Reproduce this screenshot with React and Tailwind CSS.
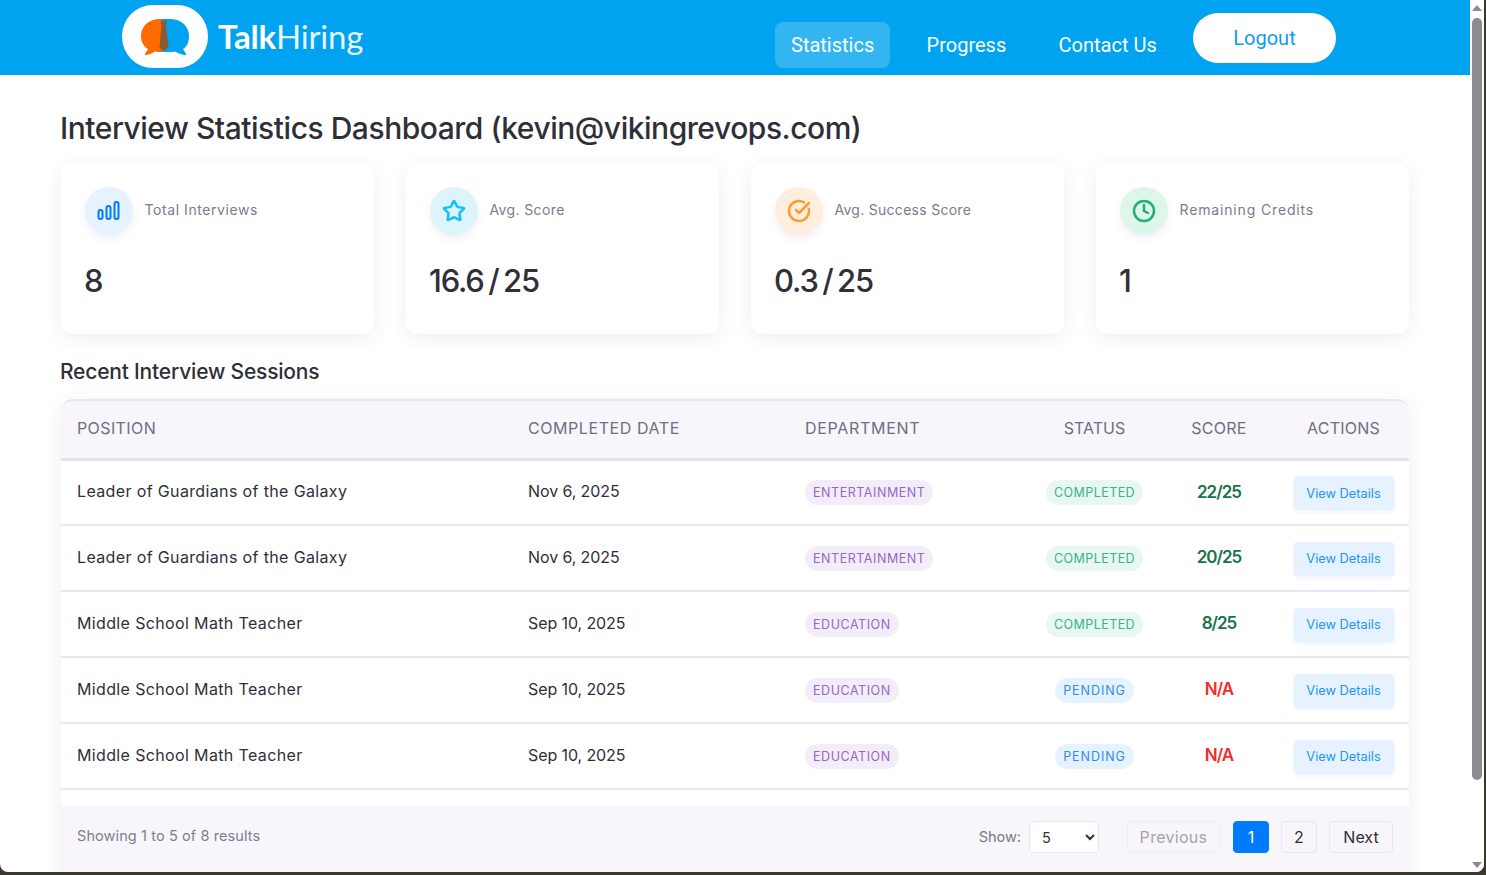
import React from "react";
import { Star, CircleCheckBig, Clock } from "lucide-react";

const F = { fontFamily: "Inter, 'Liberation Sans', sans-serif" };

function Logo() {
  return (
    <svg width="50" height="38" viewBox="0 0 50 38">
      <path d="M20 1C9 1 1 8 1 18c0 6 3 11 7 13l-3 5c-.5 1 0 1.500 1 1.200 3-.7 7-2.200 9-3.700 2 .5 4 .5 6 .5h4V1z" fill="#ff6a00" />
      <path d="M30 1c11 0 19 7 19 17 0 6-2 11-6 13l3 5c.5 1 0 1.500-1 1.200-3-.7-8-2.200-10-3.700-2 .5-3 .5-5 .5h-8V1z" fill="#00a3ef" />
      <path d="M21 2.500h5l.7 2-1 3 3 21-3.500 3.500h-3.500l-2.200-2.500 2-22-1-3z" fill="#8c5a33" />
    </svg>
  );
}

function BarsIcon() {
  return (
    <svg width="24" height="24" viewBox="0 0 24 24" fill="none" stroke="#007bff" strokeWidth="2">
      <rect x="1.500" y="11" width="4" height="9" rx="2" />
      <rect x="9.500" y="7" width="4" height="13" rx="2" />
      <rect x="17.500" y="3" width="4" height="17" rx="2" />
    </svg>
  );
}

function StatCard({ icon, bg, label, value, track }) {
  return (
    <div className="flex h-[170px] flex-col rounded-xl bg-white pl-6 pt-[23px] shadow-[0_4px_20px_rgba(80,60,120,0.09)]">
      <div className="flex items-start gap-3">
        <div className={`flex h-12 w-12 items-center justify-center rounded-full shadow-[0_4px_8px_rgba(80,60,120,0.08)] ${bg}`}>{icon}</div>
        <div className={`-ml-[0.5px] pt-[13px] text-[14px] leading-[20px] text-[#7d7a8c] ${track}`}>{label}</div>
      </div>
      <div className="mt-[24px] -ml-px text-[31px] font-medium leading-[44px] tracking-[-1.200px] [word-spacing:-2.500px] text-[#2f2f38]">{value}</div>
    </div>
  );
}

const DEPT = "rounded-full bg-[#f3edf9] px-2 py-[5px] text-[12.500px] leading-[16px] tracking-[0.55px] text-[#9468c6]";
const rows = [
  ["Leader of Guardians of the Galaxy", "Nov 6, 2025", "ENTERTAINMENT", "COMPLETED", "22/25"],
  ["Leader of Guardians of the Galaxy", "Nov 6, 2025", "ENTERTAINMENT", "COMPLETED", "20/25"],
  ["Middle School Math Teacher", "Sep 10, 2025", "EDUCATION", "COMPLETED", "8/25"],
  ["Middle School Math Teacher", "Sep 10, 2025", "EDUCATION", "PENDING", "N/A"],
  ["Middle School Math Teacher", "Sep 10, 2025", "EDUCATION", "PENDING", "N/A"],
];

function Row({ r }) {
  const done = r[3] === "COMPLETED";
  return (
    <tr className="h-[66px] border-b-2 border-[#e8e6f0]">
      <td className="pb-[2px] pl-4 text-[16px] tracking-[0.36px] text-[#2f2f38]">{r[0]}</td>
      <td className="pb-[2px] pl-4 text-[16px] tracking-[-0.1px] text-[#2f2f38]">{r[1]}</td>
      <td className="pb-[2px] pl-4"><span className={DEPT}>{r[2]}</span></td>
      <td className="pb-[2px] text-center">
        <span className={`rounded-full px-2 py-[5px] text-[12.500px] leading-[16px] ${done ? "bg-[#e8f7f1] tracking-[0.45px] text-[#35b588]" : "bg-[#e5f2ff] tracking-[0.95px] text-[#2f8cf0]"}`}>{r[3]}</span>
      </td>
      <td className={`text-center text-[17px] font-semibold tracking-[-1px] ${done ? "text-[#157347]" : "text-[#f02c2c]"}`}>{r[4]}</td>
      <td className="pb-[2px] text-center">
        <button className="mt-1 h-[34px] w-[100px] rounded bg-[#e6f2ff] text-[12.800px] text-[#2196f3] shadow-[0_2px_4px_rgba(0,123,255,0.08)]">View Details</button>
      </td>
    </tr>
  );
}

function PageBtn({ children, cls }) {
  return <div className={`flex h-8 items-center justify-center rounded border text-[16px] ${cls}`}>{children}</div>;
}

function Scrollbar() {
  return (
    <div className="flex w-[14px] shrink-0 flex-col items-center bg-white">
      <div className="mt-[5px] h-0 w-0 border-x-[5px] border-b-[6px] border-x-transparent border-b-[#8a8a8a]" />
      <div className="mt-[7px] h-[762px] w-[10px] rounded-full bg-[#8c8c8c]" />
      <div className="mt-[82px] h-0 w-0 border-x-[5px] border-t-[6px] border-x-transparent border-t-[#8a8a8a]" />
    </div>
  );
}

export default function App() {
  return (
    <div style={F} className="h-[875px] w-[1486px] overflow-hidden bg-[#3a372c]">
      <div className="flex h-[872px] w-[1484px] overflow-hidden rounded-b-lg bg-white">
        <div className="w-[1470px] shrink-0 overflow-hidden">
          <header className="flex h-[75px] bg-[#00a3ef] pl-[122px]">
            <div className="mt-[5px] flex h-[63px] w-[86px] items-center justify-center rounded-[31px] bg-white"><Logo /></div>
            <div style={{ fontFamily: "Lato, sans-serif" }} className="ml-[10px] mt-[14px] text-[33px] leading-[44px] tracking-[-0.2px] text-white">
              <span className="font-bold">Talk</span><span className="font-normal opacity-90">Hiring</span>
            </div>
            <nav style={{ fontFamily: "Roboto, sans-serif" }} className="ml-auto mr-[134px] flex items-start gap-[20.300px] text-[20px] text-white">
              <a className="mt-[22px] flex h-[46px] items-center rounded-lg bg-white/20 px-4">Statistics</a>
              <a className="mt-[22px] flex h-[46px] items-center px-4">Progress</a>
              <a className="mt-[22px] flex h-[46px] items-center px-4">Contact Us</a>
              <a className="mt-[13px] flex h-[50px] w-[143px] items-center justify-center rounded-full bg-white text-[#0d9cf0]">Logout</a>
            </nav>
          </header>

          <main className="px-[60px]">
            <h1 className="mt-[33px] text-[30px] font-medium leading-[40px] tracking-[-0.47px] text-[#2f2f38]">Interview Statistics Dashboard (kevin@vikingrevops.com)</h1>

            <div className="mt-4 ml-px grid w-[1348px] grid-cols-4 gap-8">
              <StatCard bg="bg-[#e5f2ff]" track="tracking-[0.57px]" label="Total Interviews" value="8" icon={<BarsIcon />} />
              <StatCard bg="bg-[#ddf4fb]" track="tracking-[0.38px]" label="Avg. Score" value="16.6 / 25" icon={<Star size={24} strokeWidth={2.5} color="#0dc0ff" />} />
              <StatCard bg="bg-[#ffeedd]" track="tracking-[0.28px]" label="Avg. Success Score" value="0.3 / 25" icon={<CircleCheckBig size={24} strokeWidth={2.5} color="#fb9f2c" />} />
              <StatCard bg="bg-[#def5ea]" track="tracking-[0.85px]" label="Remaining Credits" value="1" icon={<Clock size={24} strokeWidth={2.5} color="#1cb170" />} />
            </div>

            <h2 className="mt-[24px] text-[21px] font-medium leading-[28px] tracking-[-0.2px] text-[#2f2f38]">Recent Interview Sessions</h2>

            <div className="ml-px mt-[13px] h-[500px] w-[1348px] overflow-hidden rounded-t-xl border-t-2 border-[#e8e6f0] bg-white shadow-[0_4px_20px_rgba(80,60,120,0.09)]">
              <table className="w-full table-fixed border-collapse">
                <colgroup>
                  <col className="w-[451px]" />
                  <col className="w-[277px]" />
                  <col className="w-[240px]" />
                  <col className="w-[131px]" />
                  <col className="w-[118px]" />
                  <col className="w-[131px]" />
                </colgroup>
                <thead>
                  <tr className="h-[58px] border-b-[3px] border-[#e5e2ec] bg-[#f8f6fa] text-[16px] font-normal text-[#6d6f85]">
                    <th className="pb-[3px] pl-4 text-left font-normal tracking-[0.4px]">POSITION</th>
                    <th className="pb-[3px] pl-4 text-left font-normal tracking-[0.57px]">COMPLETED DATE</th>
                    <th className="pb-[3px] pl-4 text-left font-normal tracking-[0.7px]">DEPARTMENT</th>
                    <th className="pb-[3px] text-center font-normal">STATUS</th>
                    <th className="pb-[3px] text-center font-normal tracking-[0.3px]">SCORE</th>
                    <th className="pb-[3px] text-center font-normal tracking-[0.2px]">ACTIONS</th>
                  </tr>
                </thead>
                <tbody>{rows.map((r, i) => <Row key={i} r={r} />)}</tbody>
              </table>
              <div className="mt-4 flex h-[70px] items-start bg-[#f8f6fa] px-4 pt-[15px]">
                <div className="text-[14.500px] leading-[30px] tracking-[0.1px] text-[#7a7f92]">Showing 1 to 5 of 8 results</div>
                <div className="ml-auto flex items-center">
                  <span className="mr-2 text-[14.500px] text-[#77778a]">Show:</span>
                  <select className="h-8 w-[70px] rounded border border-[#e8e6f0] bg-white pl-2 text-[14.500px] text-[#2f2f38]"><option>5</option></select>
                  <PageBtn cls="ml-[28px] w-[93px] border-[#f0eef4] tracking-[0.3px] text-[#a3a3ad]">Previous</PageBtn>
                  <PageBtn cls="ml-[13px] w-9 border-[#007bff] bg-[#007bff] text-white">1</PageBtn>
                  <PageBtn cls="ml-[12px] w-9 border-[#e8e6f0] text-[#2f2f38]">2</PageBtn>
                  <PageBtn cls="ml-[12px] w-16 border-[#e8e6f0] text-[#2f2f38]">Next</PageBtn>
                </div>
              </div>
            </div>
          </main>
        </div>
        <Scrollbar />
      </div>
    </div>
  );
}
